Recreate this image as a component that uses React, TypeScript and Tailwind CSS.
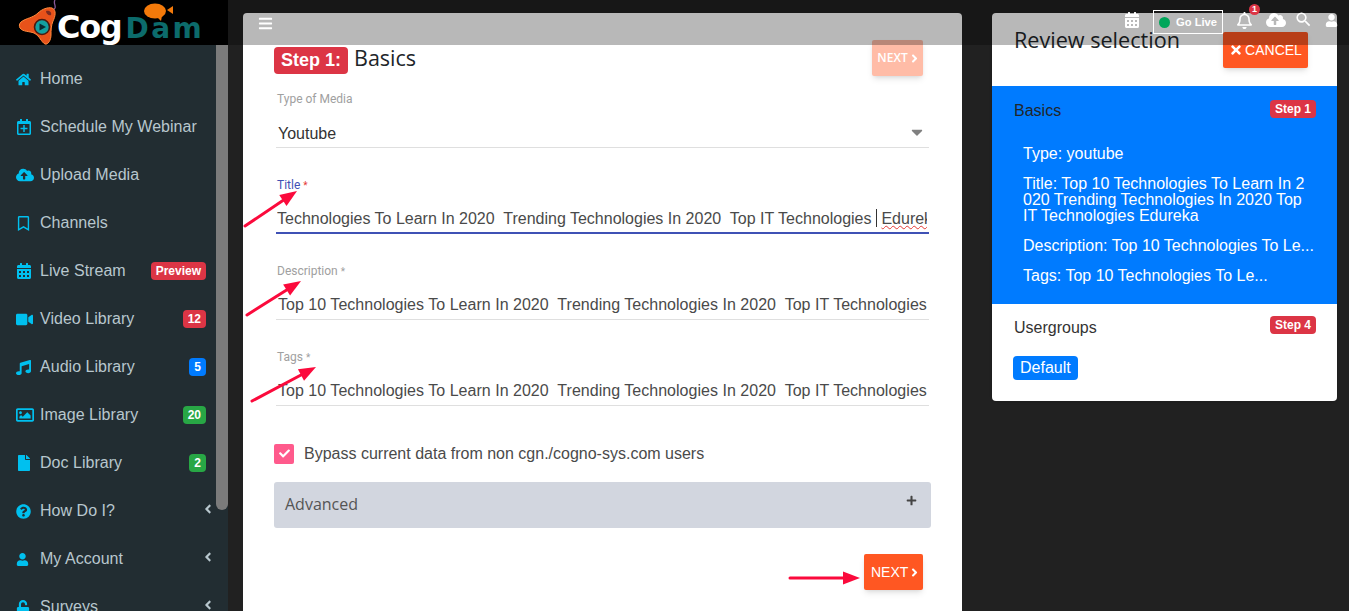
import React from "react";
import {
  FaHome, FaRegCalendarPlus, FaCloudUploadAlt, FaRegBookmark, FaCalendarAlt, FaVideo, FaMusic, FaRegImage, FaFile,
  FaQuestionCircle, FaUser, FaUnlock, FaAngleLeft, FaAngleRight, FaBars, FaRegBell, FaTimes, FaPlus, FaCheck, FaCaretDown,
} from "react-icons/fa";
import { MdSearch } from "react-icons/md";

const navItems = [
  { icon: FaHome, label: "Home", iconSize: 15 },
  { icon: FaRegCalendarPlus, label: "Schedule My Webinar", iconSize: 16 },
  { icon: FaCloudUploadAlt, label: "Upload Media", iconSize: 18 },
  { icon: FaRegBookmark, label: "Channels", iconSize: 15 },
  { icon: FaCalendarAlt, label: "Live Stream", iconSize: 16, badge: "Preview", badgeClass: "bg-[#dc3545]" },
  { icon: FaVideo, label: "Video Library", iconSize: 17, badge: "12", badgeClass: "bg-[#dc3545]" },
  { icon: FaMusic, label: "Audio Library", iconSize: 15, badge: "5", badgeClass: "bg-[#007bff]" },
  { icon: FaRegImage, label: "Image Library", iconSize: 18, badge: "20", badgeClass: "bg-[#28a745]" },
  { icon: FaFile, label: "Doc Library", iconSize: 16, badge: "2", badgeClass: "bg-[#28a745]" },
  { icon: FaQuestionCircle, label: "How Do I?", iconSize: 15, chevron: true },
  { icon: FaUser, label: "My Account", iconSize: 13, chevron: true },
  { icon: FaUnlock, label: "Surveys", iconSize: 14, chevron: true },
];

const long = "Top 10 Technologies To Learn In 2020  Trending Technologies In 2020  Top IT Technologies";

function Field({ label, value }: { label: string; value: string }) {
  return (
    <div className="mb-[29px]">
      <div className="pt-[1px] h-[14px] text-[12px] leading-[14px] text-[#a0a0a0] pl-[1px]" style={{ fontFamily: "Roboto, sans-serif" }}>
        {label} <span className="text-[10px]">*</span>
      </div>
      <div className="mt-[14px] h-[29px] border-b border-[#dfdfdf] pl-[2px] pr-[2px] overflow-hidden whitespace-pre text-[16px] leading-[27px] tracking-[0.024px] text-[#4a4a4a]">
        {value}
      </div>
    </div>
  );
}

function Arrow({ x1, y1, x2, y2 }: { x1: number; y1: number; x2: number; y2: number }) {
  const dx = x2 - x1;
  const dy = y2 - y1;
  const len = Math.hypot(dx, dy);
  const ux = dx / len;
  const uy = dy / len;
  const bx = x2 - ux * 17;
  const by = y2 - uy * 17;
  const px = -uy * 6.5;
  const py = ux * 6.5;
  return (
    <g>
      <line x1={x1} y1={y1} x2={bx} y2={by} stroke="#fb0a3c" strokeWidth="3" strokeLinecap="round" />
      <polygon points={`${x2},${y2} ${bx + px},${by + py} ${bx - px},${by - py}`} fill="#fb0a3c" />
    </g>
  );
}

export default function App() {
  return (
    <div className="relative flex h-[611px] w-[1349px] overflow-hidden bg-[#212121]" style={{ fontFamily: '"Liberation Sans", Arial, sans-serif' }}>
      {/* sidebar */}
      <aside className="flex w-[228px] shrink-0 flex-col bg-[#222d32]">
        <div className="relative h-[45px] shrink-0 bg-black overflow-hidden">
          <svg width="44" height="45" viewBox="0 0 44 45" className="absolute left-[18px] top-0">
            <path d="M37 0 C35 3 38 5 37 8 C36 10 33 10 32 13" stroke="#8a5a9a" strokeWidth="1.3" fill="none" />
            <path d="M3 22 C8 18 15 18 20 13 C24 9 30 7 34 8 C39 10 37 17 35 21 C33 26 33 30 33 35 C33 40 30 45 27 44 C23 42 22 36 16 33 C11 31 5 32 2 28 C1 26 1 24 3 22 Z" fill="#e8521a" stroke="#ff8a3c" strokeWidth="1" />
            <path d="M28 11 C31 10 34 12 33 15 C31 16 28 14 28 11 Z" fill="#7a2a20" />
            <circle cx="24" cy="27" r="7.5" fill="#14a0a0" stroke="#4a1a10" strokeWidth="1.6" />
            <path d="M21.5 23.5 L28 27 L21.5 30.5 Z" fill="#0b2a30" />
          </svg>
          <div className="absolute left-[57px] top-[8px] flex items-baseline whitespace-nowrap font-bold leading-[38px]" style={{ fontFamily: '"DejaVu Sans", sans-serif' }}>
            <span className="text-[32px] tracking-[-1.3px] text-white">Cog</span>
            <span className="ml-[4px] text-[28px] tracking-[2.5px] text-[#0c6b6b]">Dam</span>
          </div>
          <svg width="30" height="20" viewBox="0 0 30 20" className="absolute left-[144px] top-[3px]">
            <ellipse cx="11" cy="8" rx="11" ry="7.5" fill="#f47a0a" />
            <path d="M13 14 L17 18 L18 13 Z M23 7 L29 3 L29 11 Z" fill="#f47a0a" />
          </svg>
        </div>
        <div className="flex min-h-0 flex-1">
          <nav className="w-[216px] shrink-0 overflow-hidden pt-[10px]">
            {navItems.map((it) => {
              const Icon = it.icon;
              return (
                <div key={it.label} className="flex h-[48px] items-center pl-[16px] pr-[10px] text-[16px] text-[#b8c7ce]">
                  <span className="flex w-[24px] shrink-0 items-center text-[#00c0ef]">
                    <Icon size={it.iconSize} />
                  </span>
                  <span className="flex-1 whitespace-nowrap tracking-[0.03px]">{it.label}</span>
                  {it.badge && (
                    <span className={`rounded-[4px] px-[5px] text-[12px] font-bold leading-[18px] text-white ${it.badgeClass}`}>{it.badge}</span>
                  )}
                  {it.chevron && <FaAngleLeft size={14} className="-mr-[9px] -mt-[4px] text-[#b8c7ce]" />}
                </div>
              );
            })}
          </nav>
          <div className="w-[12px] shrink-0">
            <div className="h-[465px] rounded-b-[6px] bg-[#7b7b7b]" />
          </div>
        </div>
      </aside>

      {/* main */}
      <main className="flex flex-1 items-start pl-[15px] pt-[13px]">
        <section className="h-[700px] w-[719px] shrink-0 rounded-[4px] bg-white px-[33px] pt-[27px]">
          <div className="flex h-[36px] items-start justify-between pr-[6px]">
            <div className="flex items-start pt-[7px]">
              <span className="-ml-[2px] rounded-[4px] bg-[#dc3545] px-[7px] text-[18px] font-bold leading-[27px] text-white">Step 1:</span>
              <span className="ml-[6px] -mt-[1px] text-[21.5px] leading-[24px] text-[#212529]" style={{ fontFamily: '"Open Sans", sans-serif' }}>Basics</span>
            </div>
            <button className="flex h-[36px] w-[51px] items-center justify-center rounded-[2px] bg-[#ff5722]/40 pl-[3px] text-[12px] font-semibold text-white shadow-md" style={{ fontFamily: '"Open Sans", sans-serif' }}>
              NEXT<FaAngleRight size={13} />
            </button>
          </div>

          <div className="mt-[16px]">
            <div className="relative mb-[29px]">
              <div className="h-[14px] pl-[1px] text-[12px] leading-[14px] text-[#a0a0a0]" style={{ fontFamily: "Roboto, sans-serif" }}>Type of Media</div>
              <div className="mt-[14px] flex h-[28px] items-start justify-between border-b border-[#dfdfdf] pl-[2px] pr-[3px] text-[16px] leading-[27px] text-[#333]">
                Youtube
                <FaCaretDown size={18} className="mt-[3px] text-[#808080]" />
              </div>
            </div>
            <div className="mb-[29px]">
              <div className="h-[14px] pl-[1px] pt-[1px] text-[12px] leading-[14px] text-[#3f51b5]" style={{ fontFamily: "Roboto, sans-serif" }}>
                Title <span className="text-[10px] text-[#e53935]">*</span>
              </div>
              <div className="mt-[14px] h-[29px] w-[653px] border-b-2 border-[#3f51b5] pl-[1px] pr-[2px]">
                <div className="h-[27px] overflow-hidden whitespace-pre text-[16px] leading-[27px] text-[#4a4a4a]">
                  Technologies To Learn In 2020  Trending Technologies In 2020  Top IT Technologies <span className="inline-block h-[18px] w-[1px] translate-y-[3px] bg-[#333]" /> <span className="underline decoration-wavy decoration-[#e53935] decoration-1">Edureka</span>
                </div>
              </div>
            </div>
            <Field label="Description" value={long} />
            <Field label="Tags" value={long} />
          </div>

          <div className="mt-[37px] -ml-[2px] flex h-[21px] items-center">
            <span className="flex h-[20px] w-[20px] items-center justify-center rounded-[2px] bg-[#ff5a8c] text-white">
              <FaCheck size={11} />
            </span>
            <span className="ml-[10px] text-[16px] text-[#4a4a4a]">Bypass current data from non cgn./cogno-sys.com users</span>
          </div>

          <div className="-ml-[2px] mt-[18px] flex h-[46px] w-[657px] items-start justify-between rounded-[3px] bg-[#d2d6df] pl-[11px] pr-[14px] pt-[11px]">
            <span className="text-[16px] leading-[22px] text-[#555]" style={{ fontFamily: '"Open Sans", sans-serif' }}>Advanced</span>
            <FaPlus size={11} className="mt-[2px] text-[#444]" />
          </div>

          <div className="mt-[26px] flex justify-end pr-[6px]">
            <button className="flex h-[36px] w-[59px] items-center justify-start rounded-[2px] bg-[#ff5722] pl-[7px] text-[14px] text-white shadow-md">
              NEXT<FaAngleRight size={13} />
            </button>
          </div>
        </section>

        <section className="ml-[30px] h-[388px] w-[345px] shrink-0 overflow-hidden rounded-[4px] bg-white shadow-sm">
          <div className="flex h-[73px] items-start justify-between pl-[22px] pr-[29px]">
            <h2 className="pt-[12px] text-[21.6px] leading-[30px] text-[#212529]" style={{ fontFamily: '"Open Sans", sans-serif' }}>Review selection</h2>
            <button className="mt-[19px] flex h-[36px] w-[85px] items-center justify-center gap-[2px] rounded-[2px] bg-[#ff5722] text-[14px] text-white shadow-md">
              <FaTimes size={14} />CANCEL
            </button>
          </div>
          <div className="h-[218px] bg-[#007bff] pl-[22px] pr-[21px] pt-[14px]">
            <div className="flex items-start justify-between text-[16px] leading-[22px] text-[#212529]">
              Basics
              <span className="w-[46px] rounded-[4px] bg-[#dc3545] text-center text-[12px] font-bold leading-[18px] text-white">Step 1</span>
            </div>
            <div className="w-[293px] pl-[9px] pt-[24px] text-[16px] leading-[16px] text-white [word-break:break-all]">
              <p className="mb-[14px]">Type: youtube</p>
              <p className="mb-[14px]">Title: Top 10 Technologies To Learn In 2020 Trending Technologies In 2020 Top IT Technologies Edureka</p>
              <p className="mb-[14px] whitespace-nowrap">Description: Top 10 Technologies To Le...</p>
              <p className="whitespace-nowrap">Tags: Top 10 Technologies To Le...</p>
            </div>
          </div>
          <div className="pl-[22px] pr-[21px] pt-[13px]">
            <div className="flex items-start justify-between text-[16px] leading-[22px] text-[#333]">
              Usergroups
              <span className="-mt-[1px] w-[46px] rounded-[4px] bg-[#dc3545] text-center text-[12px] font-bold leading-[18px] text-white">Step 4</span>
            </div>
            <span className="mt-[17px] -ml-[1px] inline-block rounded-[4px] bg-[#007bff] px-[7px] text-[16px] leading-[24px] text-white">Default</span>
          </div>
        </section>
      </main>

      {/* translucent top bar lying over the page */}
      <header className="absolute left-[228px] right-0 top-0 flex h-[45px] items-start bg-black/28 text-white">
        <FaBars size={15} className="ml-[30px] mt-[16px]" />
        <div className="ml-auto flex items-start pr-[11px] pt-[10px]">
          <FaCalendarAlt size={16} className="mt-[2px]" />
          <div className="ml-[13px] flex h-[24px] w-[70px] items-center border border-white pl-[5px] text-[11.2px] font-bold text-white">
            <span className="mr-[6px] h-[11px] w-[11px] rounded-full bg-[#00a65a]" />
            Go Live
          </div>
          <span className="relative ml-[13px] mt-[2px]">
            <FaRegBell size={17} />
            <span className="absolute -right-[7px] -top-[8px] flex h-[11px] w-[11px] items-center justify-center rounded-full bg-[#dc3545] text-[9px] font-bold">1</span>
          </span>
          <FaCloudUploadAlt size={20} className="ml-[13px]" />
          <MdSearch size={19} className="ml-[8px]" />
          <FaUser size={13} className="ml-[12px] mt-[4px]" />
        </div>
      </header>

      {/* annotation arrows drawn on the screenshot */}
      <svg width="1349" height="611" className="pointer-events-none absolute left-0 top-0">
        <Arrow x1={245} y1={226} x2={297} y2={191} />
        <Arrow x1={247} y1={315} x2={301} y2={281} />
        <Arrow x1={252} y1={401} x2={316} y2={367} />
        <Arrow x1={790} y1={578} x2={860} y2={578} />
      </svg>
    </div>
  );
}
